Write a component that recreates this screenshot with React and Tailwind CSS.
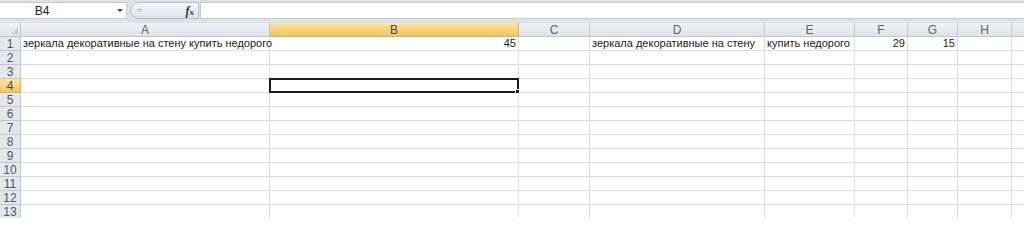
import React from "react";

const COLS = [
  { key: "A", width: 249 },
  { key: "B", width: 249 },
  { key: "C", width: 71 },
  { key: "D", width: 175 },
  { key: "E", width: 90 },
  { key: "F", width: 53 },
  { key: "G", width: 50 },
  { key: "H", width: 54 },
  { key: "I", width: 40, hidden: true },
];

const ROW_COUNT = 13;

const DATA = {
  A1: { text: "зеркала декоративные на стену купить недорого" },
  B1: { text: "45", align: "right" },
  D1: { text: "зеркала декоративные на стену" },
  E1: { text: "купить недорого" },
  F1: { text: "29", align: "right" },
  G1: { text: "15", align: "right" },
};

const ACTIVE = { col: "B", row: 4 };

function FormulaBar() {
  return (
    <div className="flex h-[23px] items-start bg-[#dde2e8] pt-[2px]">
      <div className="relative flex h-[17px] w-[127px] items-center border-y border-r border-[#c3cad4] bg-white">
        <span className="w-[84px] text-center text-[12px] text-[#1e1e1e]">B4</span>
        <span className="absolute right-[3px] top-[6px] h-0 w-0 border-x-[3px] border-t-[3px] border-x-transparent border-t-[#444]" />
      </div>
      <div className="ml-[3px] flex h-[17px] w-[69px] items-center rounded-l-full border border-[#b7bec8] bg-gradient-to-b from-[#f4f6f8] to-[#dfe3e8]">
        <span className="ml-[6px] flex flex-col gap-[1px]">
          <span className="block h-px w-[5px] bg-[#a9b0ba]" />
          <span className="block h-px w-[5px] bg-[#c9ced5]" />
        </span>
        <span className="ml-auto mr-[4px] font-['Liberation_Serif',serif] text-[12px] font-bold italic leading-none text-[#333]">
          f<span className="text-[9px]">x</span>
        </span>
      </div>
      <div className="ml-[1px] h-[17px] flex-1 border-y border-l border-[#c3cad4] bg-white" />
    </div>
  );
}

function HeaderRow() {
  return (
    <div className="flex h-[14px]">
      <div className="relative w-[21px] shrink-0 border-b border-r border-[#c1c8d2] bg-gradient-to-b from-[#eef1f4] to-[#e0e4e9]">
        <span className="absolute bottom-[2px] right-[2px] h-0 w-0 border-b-[7px] border-l-[7px] border-b-[#c9ced6] border-l-transparent" />
      </div>
      {COLS.map((col) => {
        const active = col.key === ACTIVE.col;
        return (
          <div
            key={col.key}
            style={{ width: col.width }}
            className={
              active
                ? "flex shrink-0 items-center justify-center border-b border-r border-[#e2b45a] bg-gradient-to-b from-[#fae3a6] to-[#f2c35e] text-[12px] leading-none text-[#4a4a4a]"
                : "flex shrink-0 items-center justify-center border-b border-r border-[#c1c8d2] bg-gradient-to-b from-[#eef1f4] to-[#e0e4e9] text-[12px] leading-none text-[#5a6372]"
            }
          >
            {col.hidden ? null : col.key}
          </div>
        );
      })}
    </div>
  );
}

function Row({ row }) {
  const activeRow = row === ACTIVE.row;
  return (
    <div className="flex h-[14px]">
      <div
        className={
          activeRow
            ? "flex w-[21px] shrink-0 items-center justify-center border-b border-r border-[#e2b45a] bg-gradient-to-b from-[#fae3a6] to-[#f2c35e] text-[12px] leading-none text-[#4a4a4a]"
            : "flex w-[21px] shrink-0 items-center justify-center border-b border-r border-[#c1c8d2] bg-[#e4e8ed] text-[12px] leading-none text-[#4d5666]"
        }
      >
        {row}
      </div>
      {COLS.map((col) => {
        const id = col.key + row;
        const cell = DATA[id];
        const active = col.key === ACTIVE.col && row === ACTIVE.row;
        return (
          <div
            key={id}
            style={{ width: col.width }}
            className={
              "relative flex shrink-0 items-center overflow-visible whitespace-nowrap border-b border-r border-[#dadcdf] px-[2px] text-[11px] leading-none text-[#1a1a1a] " +
              (cell && cell.align === "right" ? "justify-end" : "justify-start")
            }
          >
            {cell ? cell.text : null}
            {active ? (
              <span className="pointer-events-none absolute -left-px -top-px bottom-[-1px] right-[-1px] z-10 border-2 border-[#1b1b1b]">
                <span className="absolute -bottom-[3px] -right-[3px] h-[5px] w-[5px] border border-white bg-[#1b1b1b]" />
              </span>
            ) : null}
          </div>
        );
      })}
    </div>
  );
}

export default function App() {
  const rows = Array.from({ length: ROW_COUNT }, (_, i) => i + 1);
  return (
    <div className="h-[218px] w-[1024px] overflow-hidden bg-white font-['Liberation_Sans',Arial,sans-serif]">
      <FormulaBar />
      <HeaderRow />
      {rows.map((row) => (
        <Row key={row} row={row} />
      ))}
    </div>
  );
}
